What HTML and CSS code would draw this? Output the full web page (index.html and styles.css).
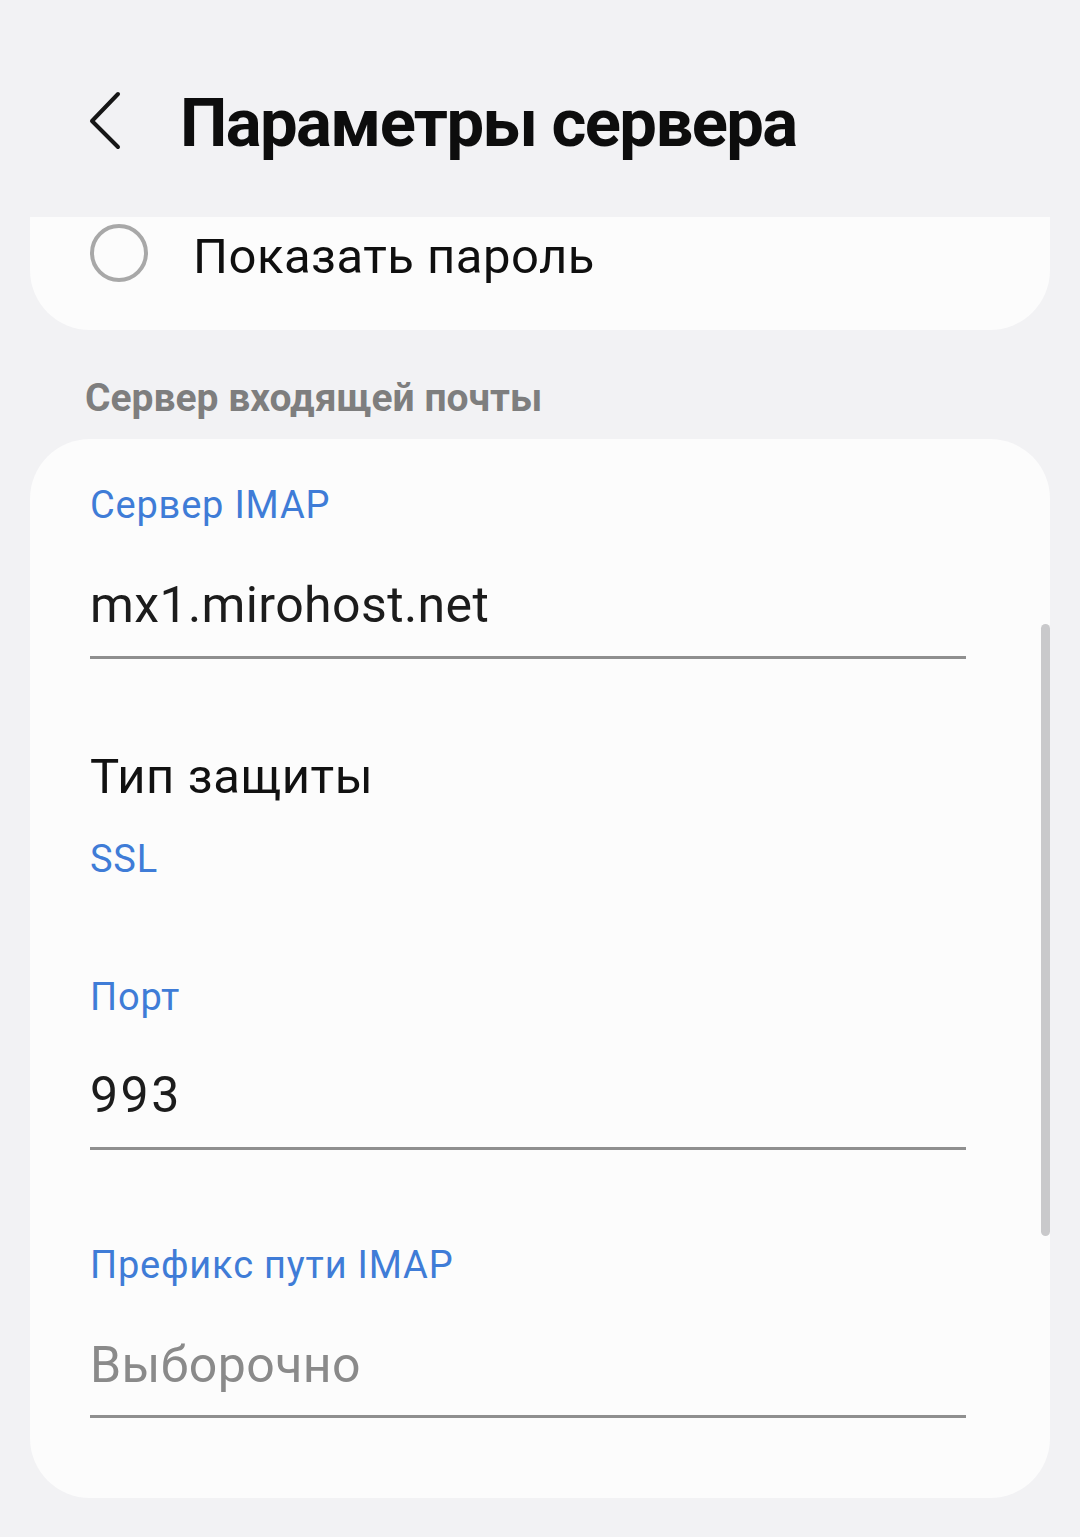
FILE: index.html
```html
<!DOCTYPE html>
<html lang="ru">
<head>
<meta charset="utf-8">
<title>Параметры сервера</title>
<link rel="stylesheet" href="styles.css">
</head>
<body>
<header class="topbar">
  <button class="back" aria-label="Назад">
    <svg width="40" height="60" viewBox="0 0 40 60"><path d="M32 4 L6 31 L32 57" fill="none" stroke="#161616" stroke-width="4" stroke-linecap="round" stroke-linejoin="round"/></svg>
  </button>
  <h1 class="title">Параметры сервера</h1>
</header>

<section class="card card-top">
  <label class="radio-row">
    <span class="radio"></span>
    <span class="radio-text">Показать пароль</span>
  </label>
</section>

<h2 class="section-label">Сервер входящей почты</h2>

<section class="card card-main">
  <div class="field">
    <div class="field-label">Сервер IMAP</div>
    <div class="field-value">mx1.mirohost.net</div>
    <div class="field-line"></div>
  </div>

  <div class="select">
    <div class="select-title">Тип защиты</div>
    <div class="select-value">SSL</div>
  </div>

  <div class="field field-port">
    <div class="field-label">Порт</div>
    <div class="field-value digits">993</div>
    <div class="field-line"></div>
  </div>

  <div class="field field-prefix">
    <div class="field-label">Префикс пути IMAP</div>
    <div class="field-value placeholder">Выборочно</div>
    <div class="field-line"></div>
  </div>

  <div class="scrollbar"></div>
</section>
</body>
</html>
```

FILE: styles.css
```css
* { box-sizing: border-box; }

html, body {
  margin: 0;
  padding: 0;
}

body {
  width: 1080px;
  height: 1537px;
  background: #f2f2f4;
  font-family: Roboto, "Noto Sans", sans-serif;
  color: #1a1a1a;
  overflow: hidden;
}

/* top app bar */
.topbar {
  height: 217px;
  display: flex;
  align-items: center;
  padding: 28px 0 0 86px;
}

.back {
  border: 0;
  background: none;
  padding: 0;
  width: 40px;
  height: 60px;
  margin-top: -6px;
  display: flex;
}

.title {
  margin: 0 0 0 54px;
  font-size: 67px;
  line-height: 80px;
  font-weight: 700;
  color: #0d0d0d;
  letter-spacing: -1.6px;
}

/* cards */
.card {
  margin: 0 30px;
  background: #fcfcfc;
}

.card-top {
  height: 113px;
  border-radius: 0 0 60px 60px;
}

.radio-row {
  display: flex;
  align-items: flex-start;
  padding: 7px 0 0 60px;
}

.radio {
  width: 58px;
  height: 58px;
  border: 4px solid #a8a8a8;
  border-radius: 50%;
  flex: none;
}

.radio-text {
  margin: 5px 0 0 45px;
  font-size: 49px;
  line-height: 56px;
  letter-spacing: 0.5px;
  color: #0f0f0f;
}

.section-label {
  margin: 44px 0 17px 85px;
  font-size: 39px;
  line-height: 48px;
  font-weight: 700;
  color: #7e7e7e;
}

.card-main {
  position: relative;
  height: 1059px;
  border-radius: 60px;
  padding: 44px 84px 0 60px;
}

.field-label,
.select-value {
  font-size: 38px;
  line-height: 44px;
  letter-spacing: 0.8px;
  color: #3f7cd7;
}

.field-value {
  margin-top: 49px;
  font-size: 50px;
  line-height: 58px;
  letter-spacing: 0.4px;
  color: #1c1c1c;
}

.field-value.digits {
  letter-spacing: 2.5px;
}

.field-value.placeholder {
  color: #8a8a8a;
}

.field-line {
  margin-top: 22px;
  height: 3px;
  background: #8f8f8f;
}

.select {
  margin-top: 90px;
}

.select-title {
  font-size: 49px;
  line-height: 56px;
  letter-spacing: 0.6px;
  color: #111;
}

.select-value {
  margin-top: 32px;
}

.field-port {
  margin-top: 94px;
}

.field-port .field-value {
  margin-top: 47px;
}

.field-port .field-line {
  margin-top: 23px;
}

.field-prefix {
  margin-top: 93px;
}

.field-prefix .field-line {
  margin-top: 21px;
}

/* overlay scroll indicator */
.scrollbar {
  position: absolute;
  right: 0;
  top: 185px;
  width: 9px;
  height: 612px;
  border-radius: 5px;
  background: #c9c9cb;
}
```
